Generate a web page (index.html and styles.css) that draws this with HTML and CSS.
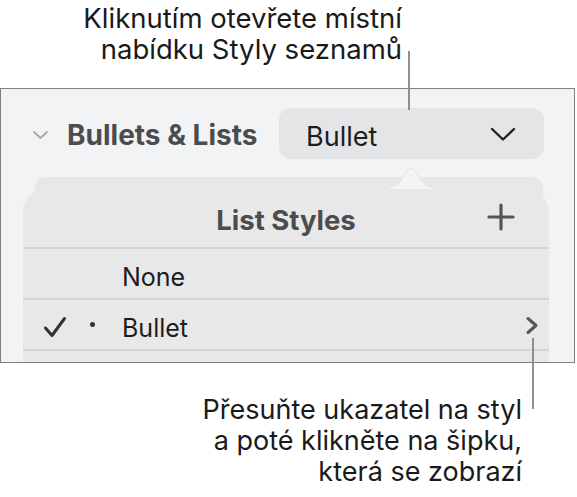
FILE: index.html
```html
<!DOCTYPE html>
<html lang="cs">
<head>
  <meta charset="UTF-8">
  <meta name="viewport" content="width=device-width, initial-scale=1.0">
  <title>Styly seznamů</title>
  <link rel="stylesheet" href="styles.css">
</head>
<body>
  <div class="callout callout-top">Kliknutím otevřete místní<br>nabídku Styly seznamů</div>
  <div class="leader leader-top"></div>

  <div class="panel">
    <div class="section-head">
      <svg class="disclosure" width="17" height="10" viewBox="0 0 17 10">
        <path d="M2 2 L8.5 8 L15 2" fill="none" stroke="#a9aaac" stroke-width="1.8" stroke-linecap="round" stroke-linejoin="round"/>
      </svg>
      <span class="section-title">Bullets &amp; Lists</span>
      <div class="popup">
        <span class="popup-label">Bullet</span>
        <svg width="26" height="15" viewBox="0 0 26 15">
          <path d="M2 2 L13 12.5 L24 2" fill="none" stroke="#222" stroke-width="2.4" stroke-linecap="round" stroke-linejoin="round"/>
        </svg>
      </div>
    </div>

    <div class="styles-card">
      <div class="popover">
        <svg class="popover-arrow" width="60" height="25" viewBox="0 0 60 25">
          <path d="M0 24 C15 24 21 15 26 6 C28 2.5 32 2.5 34 6 C39 15 45 24 60 24 Z" fill="#f3f4f6"/>
          <path d="M0 24 C15 24 21 15 26 6 C28 2.5 32 2.5 34 6 C39 15 45 24 60 24" fill="none" stroke="#e2e3e5" stroke-width="1"/>
        </svg>
        <div class="popover-head">
          <span class="popover-title">List Styles</span>
          <svg class="add" width="28" height="28" viewBox="0 0 28 28">
            <path d="M14 2 V26 M2 14 H26" stroke="#555" stroke-width="3.2" stroke-linecap="round"/>
          </svg>
        </div>
        <ul class="style-list">
          <li class="style-row">
            <span class="check"></span>
            <span class="mark"></span>
            <span class="style-name">None</span>
          </li>
          <li class="style-row">
            <span class="check">
              <svg width="24" height="22" viewBox="0 0 24 22">
                <path d="M2.5 12 L9 19.5 L21.5 2.5" fill="none" stroke="#333" stroke-width="3" stroke-linecap="round" stroke-linejoin="round"/>
              </svg>
            </span>
            <span class="mark"><i class="dot"></i></span>
            <span class="style-name">Bullet</span>
            <svg class="more" width="14" height="19" viewBox="0 0 14 19">
              <path d="M3 2.5 L11 9.5 L3 16.5" fill="none" stroke="#555" stroke-width="3" stroke-linecap="round" stroke-linejoin="round"/>
            </svg>
          </li>
          <li class="style-row"></li>
        </ul>
      </div>
    </div>
  </div>

  <div class="leader leader-bottom"></div>
  <div class="callout callout-bottom">Přesuňte ukazatel na styl<br>a poté klikněte na šipku,<br>která se zobrazí</div>
</body>
</html>
```

FILE: styles.css
```css
body {
  margin: 0;
  width: 577px;
  height: 497px;
  overflow: hidden;
  background: #fff;
  font-family: Inter, "Noto Sans", sans-serif;
  color: #1d1d1f;
  position: relative;
}
.callout {
  font-size: 27.5px;
  line-height: 31px;
  text-align: right;
  color: #1a1a1a;
}
.callout-top {
  width: 402px;
  padding-top: 3px;
  height: 88px;
  box-sizing: border-box;
}
.callout-bottom {
  width: 522px;
  margin-top: 31px;
  font-size: 27px;
}
.leader {
  position: absolute;
  width: 2px;
  background: #8e8e8e;
  z-index: 2;
}
.leader-top {
  left: 408px;
  top: 51px;
  height: 59px;
}
.leader-bottom {
  left: 532px;
  top: 338px;
  height: 71px;
}
.panel {
  width: 575px;
  height: 275px;
  box-sizing: border-box;
  border: 1px solid #808080;
  background: #f2f3f5;
  overflow: hidden;
}
.section-head {
  display: flex;
  align-items: center;
  padding: 19px 30px 0 31px;
}
.disclosure {
  margin-top: 2px;
}
.section-title {
  margin-left: 18px;
  padding-top: 3px;
  font-size: 28px;
  font-weight: 700;
  color: #4c4c4e;
}
.popup {
  margin-left: auto;
  width: 265px;
  height: 51px;
  box-sizing: border-box;
  padding: 0 28px 0 27px;
  border-radius: 12px;
  background: #e4e5e7;
  display: flex;
  align-items: center;
  justify-content: space-between;
  font-size: 27px;
  color: #1d1d1f;
}
.popup-label {
  padding-top: 6px;
}
.popup svg {
  margin-top: 1px;
}
.styles-card {
  margin: 18px 31px 0 34px;
  padding-top: 11px;
  height: 200px;
  border-radius: 11px;
  background: #e6e7e9;
}
.popover {
  position: relative;
  margin: 0 -6px 0 -12px;
  height: 200px;
  border-radius: 24px 24px 0 0;
  background: #e8e8e8;
}
.popover-arrow {
  position: absolute;
  left: 358px;
  top: -23px;
}
.popover-head {
  height: 59px;
  display: flex;
  align-items: center;
  justify-content: center;
  position: relative;
  border-bottom: 2px solid #d4d4d4;
}
.popover-title {
  font-size: 27.5px;
  font-weight: 700;
  color: #4c4c4e;
  padding-top: 5px;
}
.add {
  position: absolute;
  right: 34px;
  top: 15px;
}
.style-list {
  list-style: none;
  margin: 0;
  padding: 0;
}
.style-row {
  height: 51px;
  box-sizing: border-box;
  display: flex;
  align-items: center;
  padding: 0 10px 0 20px;
  border-bottom: 2px solid #d4d4d4;
  font-size: 25px;
  color: #1d1d1f;
}
.check {
  width: 24px;
  height: 22px;
}
.mark {
  width: 55px;
  display: flex;
  align-items: center;
  padding-left: 23px;
  box-sizing: border-box;
}
.dot {
  width: 5px;
  height: 5px;
  border-radius: 50%;
  background: #333;
}
.style-name {
  flex: 1;
  padding-top: 6px;
}
.more {
  margin-top: 1px;
}
```
